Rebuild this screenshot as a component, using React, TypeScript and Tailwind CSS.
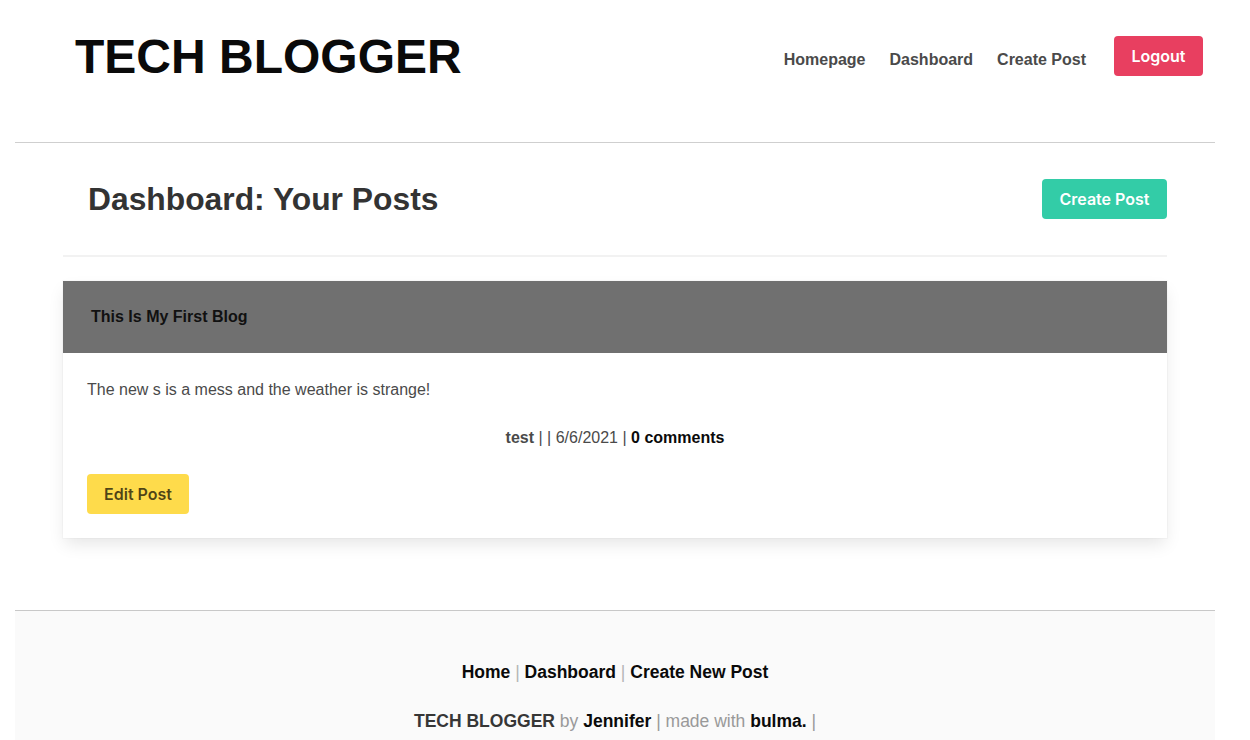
import React from 'react';

const sans = 'font-["Liberation_Sans",Helvetica,Arial,sans-serif]';
const btn = 'font-["Inter",sans-serif] font-semibold text-[16px] h-10 rounded-[4px] flex items-center justify-center';

export default function App() {
  return (
    <div className={`${sans} bg-white min-h-[740px] text-[16px] leading-6`}>
      <div className="w-[1200px] ml-[15px]">
        {/* Navbar */}
        <header className="h-[112px] flex items-center pl-[60px] pr-[12px]">
          <h1 className="mt-[2px] text-[48px] leading-[54px] font-bold text-[#0a0a0a]">TECH BLOGGER</h1>
          <nav className="ml-auto flex items-center">
            <a className="px-3 mt-[8px] font-bold text-[#4a4a4a]">Homepage</a>
            <a className="px-3 mt-[8px] font-bold text-[#4a4a4a]">Dashboard</a>
            <a className="px-3 mt-[8px] font-bold text-[#4a4a4a]">Create Post</a>
            <button className={`${btn} ml-4 w-[89px] bg-[#e83f60] text-white`}>Logout</button>
          </nav>
        </header>
        <div className="mt-[30px] h-px bg-[#cfcfcf]" />

        {/* Dashboard */}
        <main className="w-[1104px] mx-auto pt-9 pb-[72px]">
          <div className="h-10 flex items-center pl-[25px]">
            <h2 className="text-[31.8px] leading-10 font-bold text-[#333333]">Dashboard: Your Posts</h2>
            <button className={`${btn} ml-auto w-[125px] bg-[#33cca7] text-white`}>Create Post</button>
          </div>
          <div className="mt-9 h-[2px] bg-[#f2f2f2]" />

          <article className="mt-6 bg-white shadow-[0_8px_16px_-2px_rgba(10,10,10,0.1),0_0_0_1px_rgba(10,10,10,0.02)]">
            <div className="h-[72px] bg-[#707070] flex items-center pl-7">
              <h3 className="font-bold text-[#111111]">This Is My First Blog</h3>
            </div>
            <div className="px-6 pt-[25px] pb-6">
              <p className="text-[#4a4a4a]">The new s is a mess and the weather is strange!</p>
              <p className="mt-6 text-center text-[#4a4a4a]">
                <b className="font-bold">test</b> | | 6/6/2021 | <b className="font-bold text-[#0a0a0a]">0 comments</b>
              </p>
              <button className={`${btn} mt-6 w-[102px] bg-[#fedb4b] text-[rgba(0,0,0,0.7)]`}>Edit Post</button>
            </div>
          </article>
        </main>

        {/* Footer */}
        <footer className="border-t border-[#c8c8c8] bg-[#fafafa] pt-[49px] pb-6 text-center text-[17.5px] leading-[25px]">
          <p className="font-bold text-[#0a0a0a]">
            Home <span className="font-normal text-[#b5b5b5]">|</span> Dashboard{' '}
            <span className="font-normal text-[#b5b5b5]">|</span> Create New Post
          </p>
          <p className="mt-[24px] text-[#999999]">
            <b className="font-bold text-[#363636]">TECH BLOGGER</b> by{' '}
            <b className="font-bold text-[#0a0a0a]">Jennifer</b> | made with{' '}
            <b className="font-bold text-[#0a0a0a]">bulma.</b> |
          </p>
        </footer>
      </div>
    </div>
  );
}
